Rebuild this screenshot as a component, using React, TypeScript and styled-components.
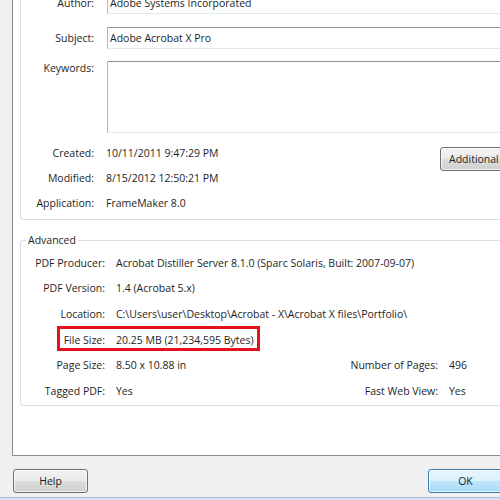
import React from "react";
import styled, { createGlobalStyle } from "styled-components";

const GlobalStyle = createGlobalStyle`
  html, body {
    margin: 0;
    padding: 0;
  }
  body {
    background: #f0f0f0;
    font-family: "Open Sans", "Noto Sans", sans-serif;
    font-size: 10.5px;
    color: #1e1e1e;
  }
`;

const DocumentProperties = () => {
  return (
    <Viewport>
      <GlobalStyle />
      <Dialog>
        <TabPanel>
          <Group>
            <Legend>Description</Legend>
            <DescriptionGrid>
              <FieldLabel>Author:</FieldLabel>
              <TextField>Adobe Systems Incorporated</TextField>
              <FieldLabel>Subject:</FieldLabel>
              <TextField $gapBelow={12}>Adobe Acrobat X Pro</TextField>
              <FieldLabel $top>Keywords:</FieldLabel>
              <TextField $tall $gapBelow={8} />
              <InfoLabel>Created:</InfoLabel>
              <InfoValue>10/11/2011 9:47:29 PM</InfoValue>
              <AdditionalButton type="button">Additional Metadata...</AdditionalButton>
              <InfoLabel>Modified:</InfoLabel>
              <InfoValue>8/15/2012 12:50:21 PM</InfoValue>
              <InfoLabel>Application:</InfoLabel>
              <InfoValue>FrameMaker 8.0</InfoValue>
            </DescriptionGrid>
          </Group>

          <Group $advanced>
            <Legend>Advanced</Legend>
            <AdvancedRow>
              <RowLabel>PDF Producer:</RowLabel>
              <RowValue $span>
                Acrobat Distiller Server 8.1.0 (Sparc Solaris, Built: 2007-09-07)
              </RowValue>
            </AdvancedRow>
            <AdvancedRow>
              <RowLabel>PDF Version:</RowLabel>
              <RowValue $span>1.4 (Acrobat 5.x)</RowValue>
            </AdvancedRow>
            <AdvancedRow>
              <RowLabel>Location:</RowLabel>
              <RowValue $span>
                C:\Users\user\Desktop\Acrobat - X\Acrobat X files\Portfolio\
              </RowValue>
            </AdvancedRow>
            <AdvancedRow>
              <RowLabel>File Size:</RowLabel>
              <RowValue $span>20.25 MB (21,234,595 Bytes)</RowValue>
              <Highlight />
            </AdvancedRow>
            <AdvancedRow>
              <RowLabel>Page Size:</RowLabel>
              <RowValue>8.50 x 10.88 in</RowValue>
              <RowLabel>Number of Pages:</RowLabel>
              <RowValue>496</RowValue>
            </AdvancedRow>
            <AdvancedRow>
              <RowLabel>Tagged PDF:</RowLabel>
              <RowValue>Yes</RowValue>
              <RowLabel>Fast Web View:</RowLabel>
              <RowValue>Yes</RowValue>
            </AdvancedRow>
          </Group>
        </TabPanel>

        <Footer>
          <Button type="button">Help</Button>
          <ButtonGroup>
            <Button type="button" $primary>
              OK
            </Button>
            <Button type="button">Cancel</Button>
          </ButtonGroup>
        </Footer>
      </Dialog>
    </Viewport>
  );
};

const Viewport = styled.div`
  width: 500px;
  height: 500px;
  overflow: hidden;
  background: #d4e0ed;
`;

const Dialog = styled.div`
  width: 600px;
  height: 498px;
  box-sizing: border-box;
  padding: 0 12px;
  background: #f0f0f0;
  border-bottom: 1px solid #a9bdd4;
  display: flex;
  flex-direction: column;
`;

const TabPanel = styled.div`
  margin-top: -40px;
  height: 496px;
  box-sizing: border-box;
  padding: 6px 7px 0 7px;
  background: #ffffff;
  border: 1px solid #898c95;
  border-top: none;
  display: flex;
  flex-direction: column;
`;

const Group = styled.fieldset<{ $advanced?: boolean }>`
  margin: ${(p) => (p.$advanced ? "12px 0 0 0" : "0")};
  padding: ${(p) => (p.$advanced ? "2px 8px 1px 0" : "10px 8px 3px 0")};
  border: 1px solid #d5dfe5;
  border-radius: 3px;
  min-inline-size: 0;
`;

const Legend = styled.legend`
  margin-left: 5px;
  padding: 0 2px;
  line-height: 16px;
  font-size: 10.5px;
  color: #1e1e1e;
`;

const DescriptionGrid = styled.div`
  display: grid;
  grid-template-columns: 73px 1fr 131px;
  column-gap: 13px;
  align-items: start;
`;

const FieldLabel = styled.div<{ $top?: boolean }>`
  grid-column: 1;
  text-align: right;
  line-height: 14px;
  padding-top: ${(p) => (p.$top ? "0" : "4px")};
  white-space: nowrap;
`;

const TextField = styled.div<{ $tall?: boolean; $gapBelow?: number }>`
  grid-column: 2 / 4;
  height: ${(p) => (p.$tall ? "72px" : "22px")};
  margin-bottom: ${(p) => p.$gapBelow ?? 13}px;
  box-sizing: border-box;
  padding: 0 2px;
  line-height: 20px;
  white-space: nowrap;
  background: #ffffff;
  border-style: solid;
  border-width: 1px;
  border-color: #8f9196 #dadde3 #e3e9ef #b3b6bc;
`;

const InfoLabel = styled.div`
  grid-column: 1;
  text-align: right;
  line-height: 25px;
  white-space: nowrap;
`;

const InfoValue = styled.div`
  grid-column: 2;
  line-height: 25px;
  white-space: nowrap;
  margin-left: -1px;
`;

const AdditionalButton = styled.button`
  grid-column: 3;
  grid-row: span 2;
  margin-top: 6px;
  height: 24px;
  padding: 0 0 0 8px;
  text-align: left;
  font: inherit;
  color: #1e1e1e;
  border: 1px solid #707070;
  border-radius: 3px;
  background: linear-gradient(#f2f2f2 0%, #ebebeb 48%, #dddddd 52%, #cfcfcf 100%);
  box-shadow: inset 0 0 0 1px rgba(255, 255, 255, 0.7);
`;

const AdvancedRow = styled.div`
  position: relative;
  display: grid;
  grid-template-columns: 84px 201px 110px 1fr;
  column-gap: 11px;
  align-items: center;
  height: 25.6px;
`;

const RowLabel = styled.div`
  text-align: right;
  white-space: nowrap;
`;

const RowValue = styled.div<{ $span?: boolean }>`
  grid-column: ${(p) => (p.$span ? "2 / -1" : "auto")};
  white-space: nowrap;
`;

/* red annotation box drawn over the File Size row */
const Highlight = styled.div`
  position: absolute;
  left: 36px;
  top: -1px;
  width: 203px;
  height: 25px;
  box-sizing: border-box;
  border: 3px solid #e5121c;
  pointer-events: none;
`;

const Footer = styled.div`
  margin-top: 13px;
  padding: 0 2px 0 1px;
  display: flex;
  justify-content: space-between;
`;

const ButtonGroup = styled.div`
  display: flex;
  gap: 8px;
`;

const Button = styled.button<{ $primary?: boolean }>`
  width: 75px;
  height: 24px;
  padding: 0;
  font: inherit;
  color: #1e1e1e;
  border-radius: 3px;
  border: 1px solid ${(p) => (p.$primary ? "#3c7fb1" : "#707070")};
  background: ${(p) =>
    p.$primary
      ? "linear-gradient(#eaf6fd 0%, #d9f0fc 48%, #bee6fd 52%, #a7d9f5 100%)"
      : "linear-gradient(#f2f2f2 0%, #ebebeb 48%, #dddddd 52%, #cfcfcf 100%)"};
  box-shadow: inset 0 0 0 1px rgba(255, 255, 255, 0.7);
`;

export default DocumentProperties;
